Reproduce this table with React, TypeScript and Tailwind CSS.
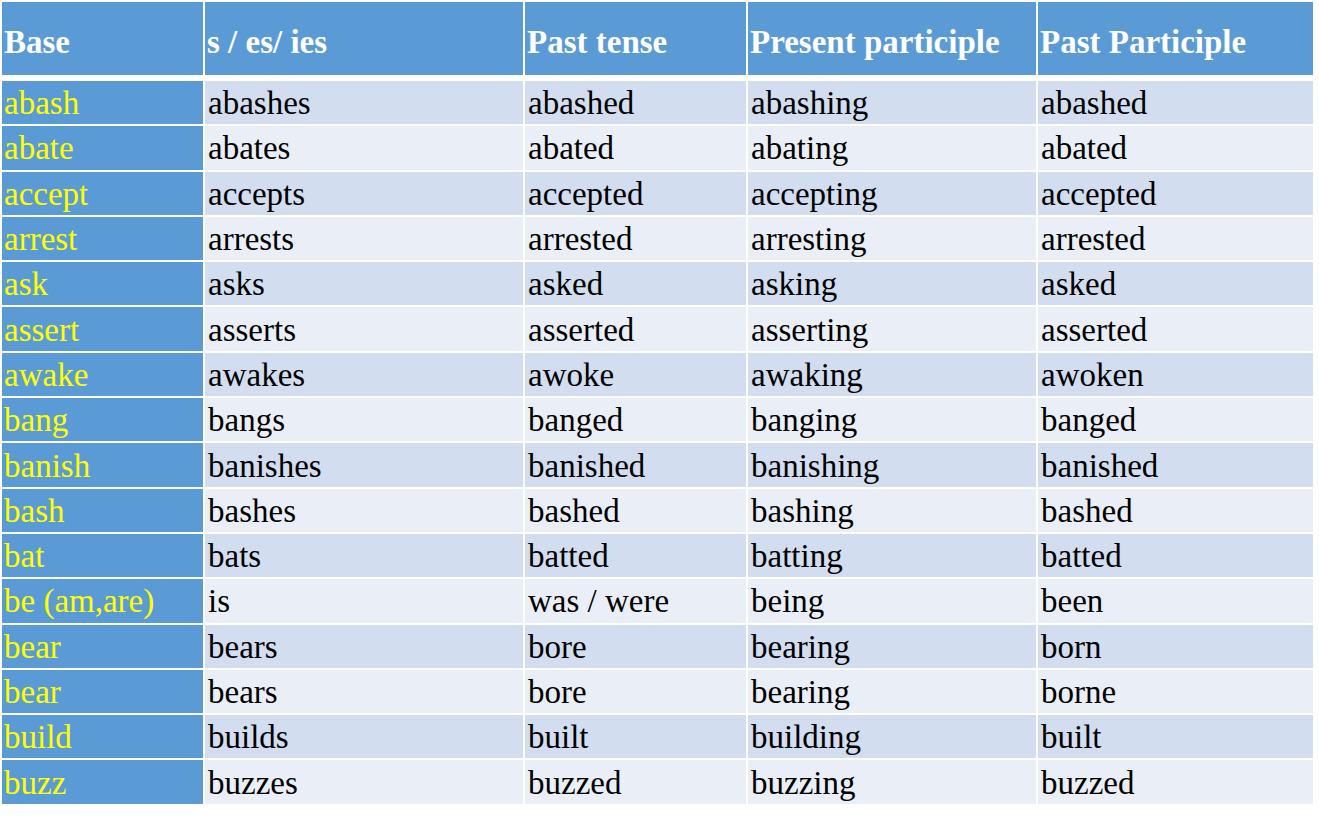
type VerbRow = {
  base: string;
  third: string;
  past: string;
  present: string;
  participle: string;
};

const headers = ["Base", "s / es/ ies", "Past tense", "Present participle", "Past Participle"];

const rows: VerbRow[] = [
  { base: "abash", third: "abashes", past: "abashed", present: "abashing", participle: "abashed" },
  { base: "abate", third: "abates", past: "abated", present: "abating", participle: "abated" },
  { base: "accept", third: "accepts", past: "accepted", present: "accepting", participle: "accepted" },
  { base: "arrest", third: "arrests", past: "arrested", present: "arresting", participle: "arrested" },
  { base: "ask", third: "asks", past: "asked", present: "asking", participle: "asked" },
  { base: "assert", third: "asserts", past: "asserted", present: "asserting", participle: "asserted" },
  { base: "awake", third: "awakes", past: "awoke", present: "awaking", participle: "awoken" },
  { base: "bang", third: "bangs", past: "banged", present: "banging", participle: "banged" },
  { base: "banish", third: "banishes", past: "banished", present: "banishing", participle: "banished" },
  { base: "bash", third: "bashes", past: "bashed", present: "bashing", participle: "bashed" },
  { base: "bat", third: "bats", past: "batted", present: "batting", participle: "batted" },
  { base: "be (am,are)", third: "is", past: "was / were", present: "being", participle: "been" },
  { base: "bear", third: "bears", past: "bore", present: "bearing", participle: "born" },
  { base: "bear", third: "bears", past: "bore", present: "bearing", participle: "borne" },
  { base: "build", third: "builds", past: "built", present: "building", participle: "built" },
  { base: "buzz", third: "buzzes", past: "buzzed", present: "buzzing", participle: "buzzed" },
];

const cols = "grid grid-cols-[201px_318px_221px_288px_275px] gap-x-[2px]";

export default function App() {
  return (
    <div className="min-h-screen bg-white p-[2px] font-['Liberation_Serif','Times_New_Roman',serif] text-[33px]">
      <div className={ `${ cols } h-[73px]` }>
        { headers.map((header) => (
          <div
            key={ header }
            className="flex items-center bg-[#5b9bd5] pl-[2px] pt-[8px] font-bold leading-none text-white"
          >
            { header }
          </div>
        )) }
      </div>
      <div className="mt-[6px] flex flex-col gap-y-[2px]">
        { rows.map((row, index) => {
          const shade = index % 2 === 0 ? "bg-[#d2deef]" : "bg-[#eaeff7]";
          const cells = [row.third, row.past, row.present, row.participle];

          return (
            <div key={ `${ row.base }-${ index }` } className={ `${ cols } h-[43.3px]` }>
              <div className="flex items-center bg-[#5b9bd5] pl-[2px] pt-[2px] leading-none text-[#ffff00]">
                { row.base }
              </div>
              { cells.map((cell, cellIndex) => (
                <div
                  key={ `${ index }-${ cellIndex }` }
                  className={ `flex items-center ${ shade } pl-[3px] pt-[2px] leading-none text-black` }
                >
                  { cell }
                </div>
              )) }
            </div>
          );
        }) }
      </div>
    </div>
  );
}
